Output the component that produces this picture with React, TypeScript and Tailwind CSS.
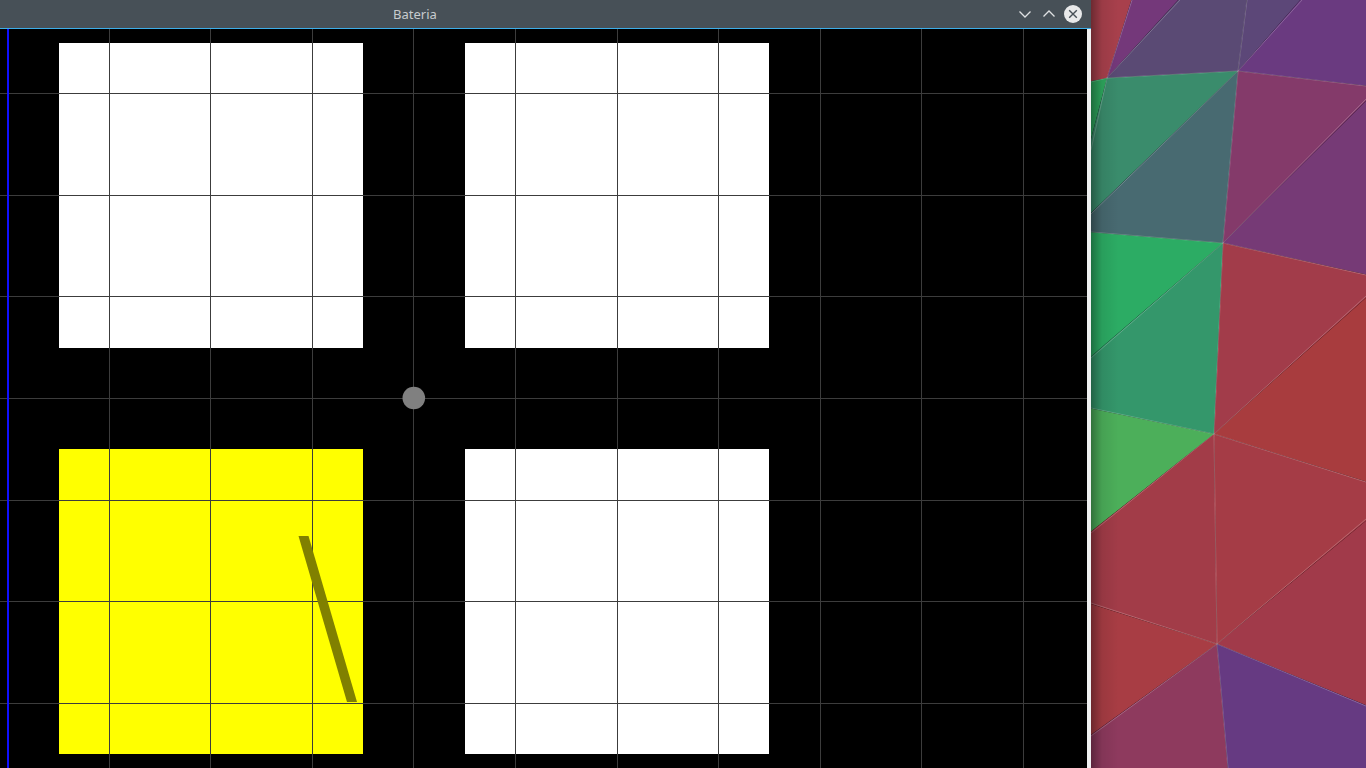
import React from 'react'

// grid positions measured on the canvas (page coordinates)
const gridX = [109, 210, 312, 413, 515, 617, 718, 820, 921, 1023]
const gridY = [93, 195, 296, 398, 500, 601, 703]

const boxes = [
  { x: 59, y: 43, fill: '#ffffff' },
  { x: 465, y: 43, fill: '#ffffff' },
  { x: 59, y: 449, fill: '#ffff00' },
  { x: 465, y: 449, fill: '#ffffff' },
]

// wallpaper facets
const facets: { points: string; fill: string }[] = [
  { points: '1088,-2 1132,-2 1107,78 1088,82', fill: '#a8404c' },
  { points: '1132,-2 1180,-2 1107,78', fill: '#74387a' },
  { points: '1180,-2 1247,-2 1238,71 1107,78', fill: '#5a4a74' },
  { points: '1247,-2 1302,-2 1238,71', fill: '#5c4778' },
  { points: '1302,-2 1368,-2 1368,86 1238,71', fill: '#6a3a80' },
  { points: '1088,82 1107,78 1088,150', fill: '#2ea85e' },
  { points: '1107,78 1238,71 1088,216 1088,150', fill: '#3a8c6c' },
  { points: '1238,71 1223,243 1088,232 1088,216', fill: '#486a71' },
  { points: '1238,71 1368,86 1368,99 1223,243', fill: '#843a6a' },
  { points: '1223,243 1368,99 1368,275', fill: '#763a76' },
  { points: '1088,232 1223,243 1088,359', fill: '#2cac64' },
  { points: '1223,243 1214,434 1088,408 1088,359', fill: '#34976b' },
  { points: '1223,243 1368,275 1368,296 1214,434', fill: '#a23c4a' },
  { points: '1214,434 1368,296 1368,482', fill: '#a83c3e' },
  { points: '1088,408 1214,434 1088,534', fill: '#4caf5a' },
  { points: '1214,434 1217,644 1088,603 1088,534', fill: '#a23c48' },
  { points: '1214,434 1368,482 1368,519 1217,644', fill: '#a53c46' },
  { points: '1217,644 1368,519 1368,706', fill: '#a13a4a' },
  { points: '1088,603 1217,644 1088,737', fill: '#a83d44' },
  { points: '1217,644 1228,770 1088,770 1088,737', fill: '#8e3a5e' },
  { points: '1217,644 1368,706 1368,770 1228,770', fill: '#663a82' },
]

const edges: [number, number, number, number][] = [
  [1132, 0, 1107, 78],
  [1180, 0, 1107, 78],
  [1107, 78, 1238, 71],
  [1107, 78, 1091, 82],
  [1107, 78, 1091, 150],
  [1247, 0, 1238, 71],
  [1302, 0, 1238, 71],
  [1238, 71, 1366, 86],
  [1238, 71, 1091, 214],
  [1238, 71, 1223, 243],
  [1223, 243, 1366, 99],
  [1223, 243, 1366, 275],
  [1223, 243, 1091, 232],
  [1223, 243, 1091, 358],
  [1223, 243, 1214, 434],
  [1214, 434, 1366, 296],
  [1214, 434, 1366, 482],
  [1214, 434, 1091, 408],
  [1214, 434, 1091, 533],
  [1214, 434, 1217, 644],
  [1217, 644, 1366, 519],
  [1217, 644, 1366, 706],
  [1217, 644, 1091, 603],
  [1217, 644, 1091, 736],
  [1217, 644, 1228, 768],
]

function Canvas() {
  return (
    <svg width={1087} height={739} viewBox="0 29 1087 739" className="block bg-black" shapeRendering="crispEdges">
      {boxes.map((b) => (
        <rect key={`${b.x}-${b.y}`} x={b.x} y={b.y} width={304} height={305} fill={b.fill} />
      ))}
      {gridX.map((x) => (
        <rect key={`vx${x}`} x={x} y={29} width={1} height={739} fill="#3c3c3c" />
      ))}
      {gridY.map((y) => (
        <rect key={`hy${y}`} x={0} y={y} width={1087} height={1} fill="#3c3c3c" />
      ))}
      <rect x={7} y={29} width={2} height={739} fill="#1010ff" />
      <polygon points="298.5,536 308.5,536 357,702 347,702" fill="#808000" shapeRendering="geometricPrecision" />
      <circle cx={413.8} cy={398} r={11.3} fill="#808080" shapeRendering="geometricPrecision" />
    </svg>
  )
}

function Wallpaper() {
  return (
    <svg width={275} height={768} viewBox="1091 0 275 768" className="block">
      <defs>
        <linearGradient id="shade" x1="0" x2="1" y1="0" y2="0">
          <stop offset="0" stopColor="#000" stopOpacity="0.35" />
          <stop offset="0.04" stopColor="#000" stopOpacity="0.08" />
          <stop offset="0.1" stopColor="#000" stopOpacity="0" />
        </linearGradient>
      </defs>
      {facets.map((f, i) => (
        <polygon key={i} points={f.points} fill={f.fill} />
      ))}
      {edges.map(([x1, y1, x2, y2], i) => (
        <line key={i} x1={x1} y1={y1} x2={x2} y2={y2} stroke="#ffffff" strokeOpacity={0.22} strokeWidth={1} />
      ))}
      <rect x={1091} y={0} width={275} height={768} fill="url(#shade)" />
    </svg>
  )
}

function TitleButtons() {
  return (
    <div className="ml-auto flex items-center gap-[6px] pr-[9px]">
      <svg width={18} height={18} viewBox="0 0 18 18">
        <path d="M3.5 6.5 L9 12 L14.5 6.5" fill="none" stroke="#dfe1e3" strokeWidth={1.3} />
      </svg>
      <svg width={18} height={18} viewBox="0 0 18 18">
        <path d="M3.5 11.5 L9 6 L14.5 11.5" fill="none" stroke="#dfe1e3" strokeWidth={1.3} />
      </svg>
      <svg width={18} height={18} viewBox="0 0 18 18">
        <circle cx={9} cy={9} r={9} fill="#e8e9ea" />
        <path d="M5.2 5.2 L12.8 12.8 M12.8 5.2 L5.2 12.8" stroke="#475057" strokeWidth={1.4} />
      </svg>
    </div>
  )
}

export default function App() {
  return (
    <div className="flex h-[768px] w-[1366px] overflow-hidden bg-black font-['Noto_Sans',sans-serif]">
      <div className="flex w-[1091px] flex-col">
        <div className="flex h-[28px] items-center bg-[#475057]">
          <span className="pl-[393px] text-[13px] leading-none text-[#c8cbce]">Bateria</span>
          <TitleButtons />
        </div>
        <div className="h-px bg-[#3daee9]" />
        <div className="flex flex-1">
          <Canvas />
          <div className="w-[4px] bg-[#eff0f1]" />
        </div>
      </div>
      <Wallpaper />
    </div>
  )
}
